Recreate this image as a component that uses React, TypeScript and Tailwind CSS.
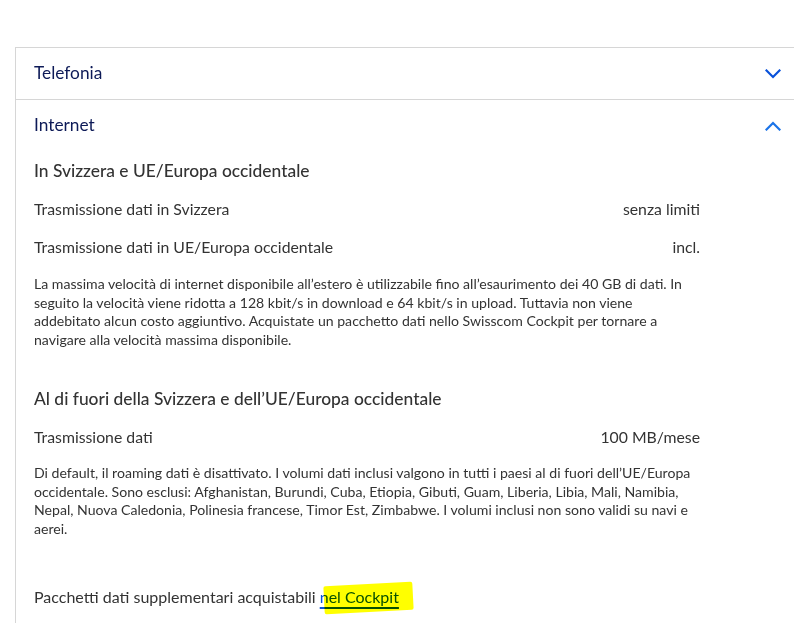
const font = { fontFamily: "Lato, 'Open Sans', sans-serif" };

function Chevron({ up, color }: { up?: boolean; color: string }) {
  return (
    <svg width="16" height="10" viewBox="0 0 16 10" fill="none" className={up ? "rotate-180" : ""}>
      <polyline points="1.5,1.5 8,8 14.5,1.5" stroke={color} strokeWidth="2.2" strokeLinecap="square" />
    </svg>
  );
}

function Row({ label, value }: { label: string; value: string }) {
  return (
    <div className="flex h-[38px] items-center justify-between text-[15.8px] text-[#333]">
      <span>{label}</span>
      <span>{value}</span>
    </div>
  );
}

export default function App() {
  return (
    <div className="min-h-screen bg-white pt-[47px] pl-[15px] overflow-hidden" style={font}>
      <div className="w-[790px] border-l border-t border-[#d6d6d6]">
        {/* Telefonia */}
        <div className="flex h-[52px] items-center justify-between border-b border-[#d6d6d6] pl-[18px] pr-[24px]">
          <span className="-mt-[2px] text-[17.3px] text-[#0d1a57]">Telefonia</span>
          <Chevron color="#0851da" />
        </div>

        {/* Internet */}
        <div className="flex h-[52px] items-center justify-between pl-[18px] pr-[24px]">
          <span className="-mt-[2px] text-[17.3px] text-[#0d1a57]">Internet</span>
          <Chevron up color="#1a73e8" />
        </div>

        <div className="w-[684px] pl-[18px]">
          <h3 className="mt-[7px] text-[17.4px] leading-[24px] font-medium text-[#333]">
            In Svizzera e UE/Europa occidentale
          </h3>
          <div className="mt-[7px]">
            <Row label="Trasmissione dati in Svizzera" value="senza limiti" />
            <Row label="Trasmissione dati in UE/Europa occidentale" value="incl." />
          </div>
          <p className="mt-[9px] text-[14.1px] leading-[18.5px] text-[#333]">
            La massima velocità di internet disponibile all’estero è utilizzabile fino all’esaurimento dei 40 GB di dati. In
            seguito la velocità viene ridotta a 128 kbit/s in download e 64 kbit/s in upload. Tuttavia non viene
            addebitato alcun costo aggiuntivo. Acquistate un pacchetto dati nello Swisscom Cockpit per tornare a
            navigare alla velocità massima disponibile.
          </p>

          <h3 className="mt-[38px] text-[17.4px] leading-[24px] font-medium text-[#333]">
            Al di fuori della Svizzera e dell’UE/Europa occidentale
          </h3>
          <div className="mt-[7px]">
            <Row label="Trasmissione dati" value="100 MB/mese" />
          </div>
          <p className="mt-[8px] text-[14.1px] leading-[18.5px] text-[#333]">
            Di default, il roaming dati è disattivato. I volumi dati inclusi valgono in tutti i paesi al di fuori dell’UE/Europa
            occidentale. Sono esclusi: Afghanistan, Burundi, Cuba, Etiopia, Gibuti, Guam, Liberia, Libia, Mali, Namibia,
            Nepal, Nuova Caledonia, Polinesia francese, Timor Est, Zimbabwe. I volumi inclusi non sono validi su navi e
            aerei.
          </p>

          <p className="mt-[47px] pb-6 text-[16px] leading-[24px] text-[#333]">
            Pacchetti dati supplementari acquistabili{" "}
            <a href="#" className="relative inline-block text-[#0851da] underline decoration-[1.5px] underline-offset-[4px]">
              nel Cockpit
              <span className="pointer-events-none absolute left-[4px] right-[-14px] top-[-1px] bottom-[-3px] -rotate-[3deg] rounded-[2px] bg-[#ffff00] mix-blend-multiply" />
            </a>
          </p>
        </div>
      </div>
    </div>
  );
}
